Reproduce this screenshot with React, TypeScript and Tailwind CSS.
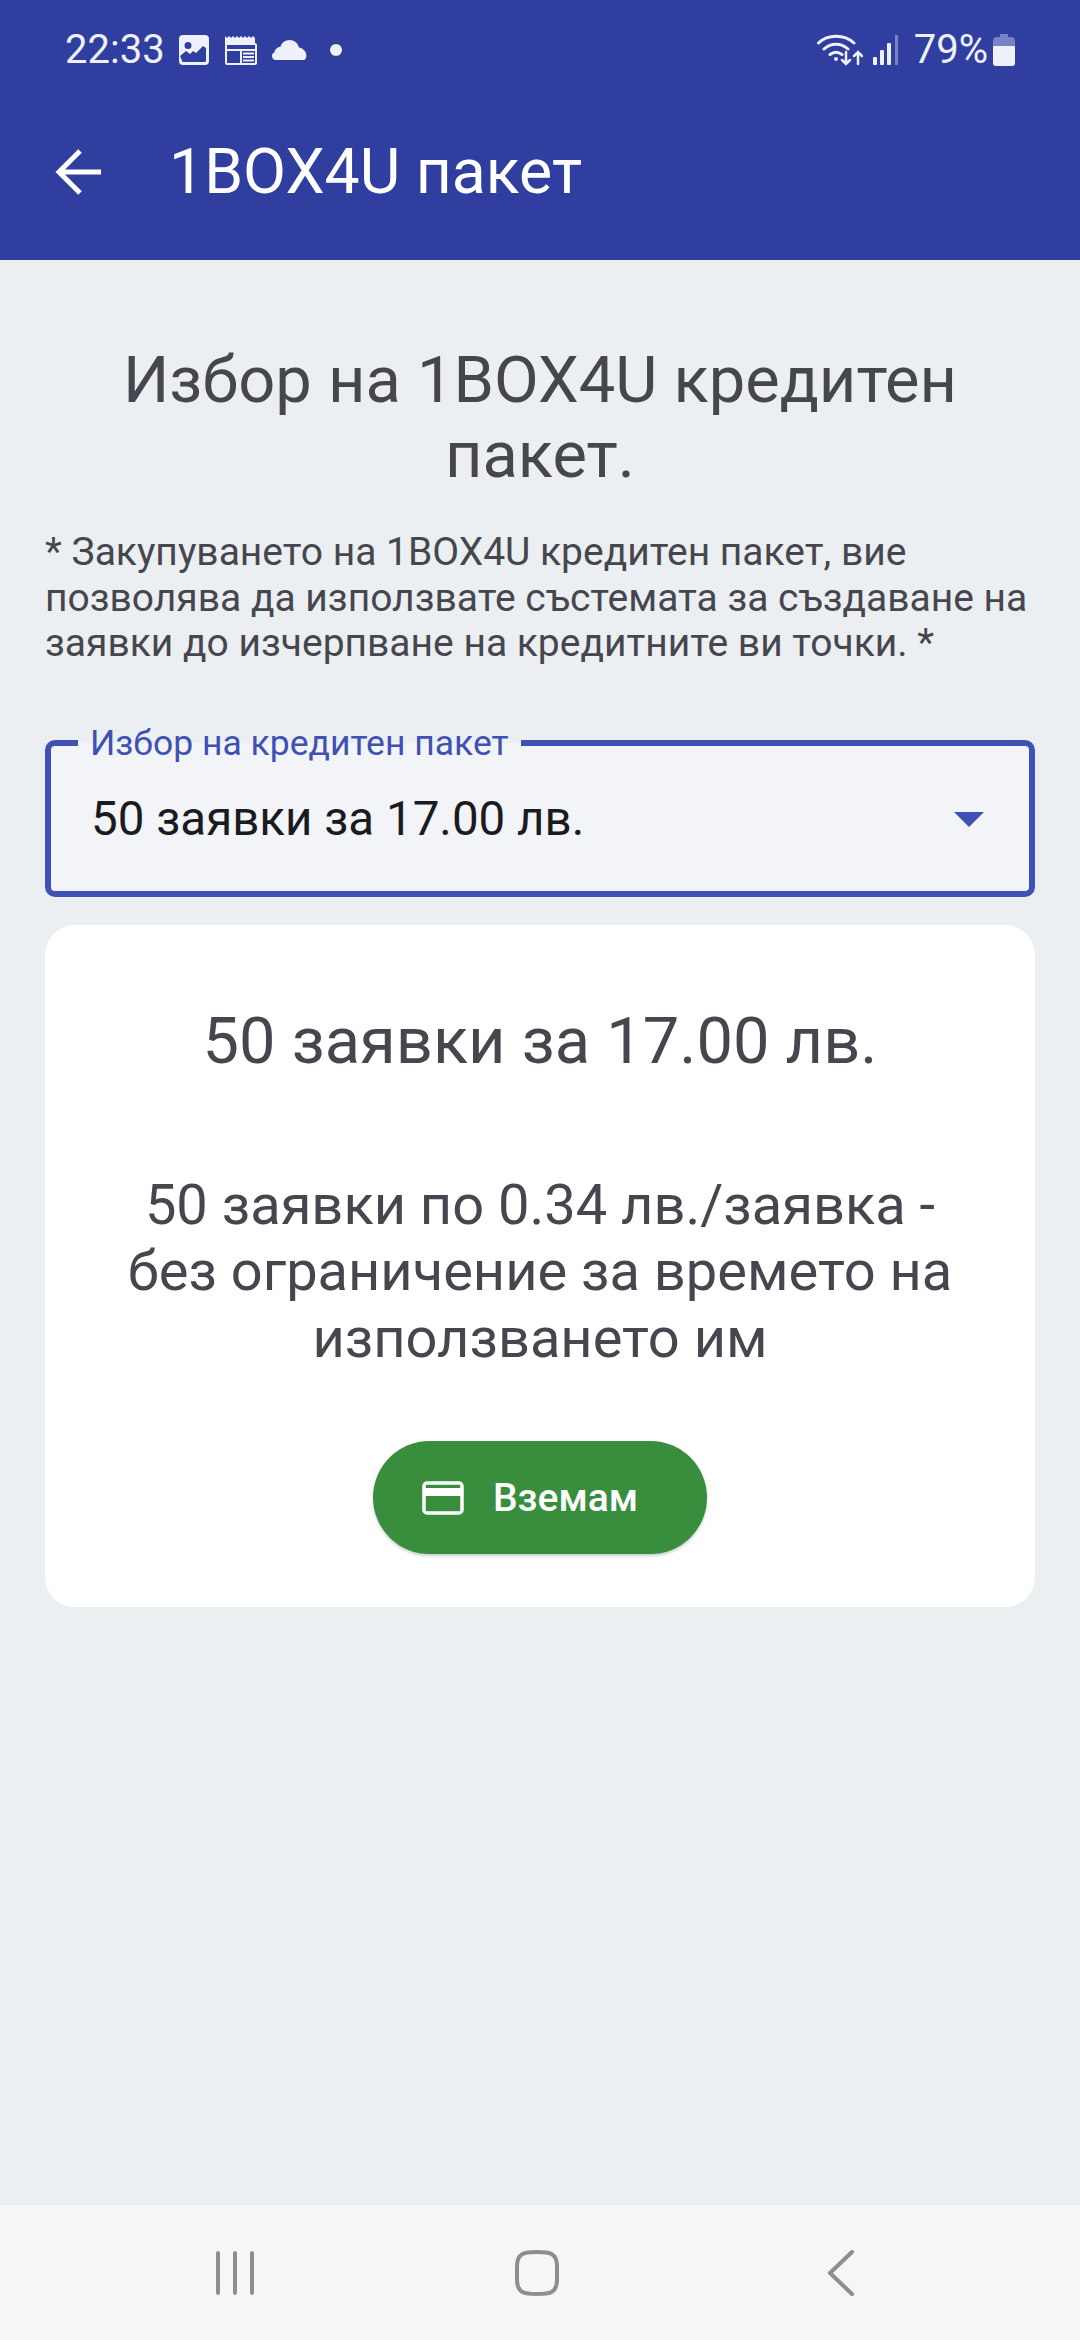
const FONT = "font-['Roboto','Noto_Sans',sans-serif]";

function StatusBar() {
  return (
    <div className="h-[100px] flex items-center justify-between pl-[65px] pr-[65px] text-[#eef0fa]">
      <div className="flex items-center">
        <span className="text-[40px] leading-none">22:33</span>
        <svg className="ml-[13px]" width="32" height="32" viewBox="0 0 32 32">
          <path fillRule="evenodd" fill="currentColor" d="M5 1h22a4 4 0 0 1 4 4v22a4 4 0 0 1-4 4H5a4 4 0 0 1-4-4V5a4 4 0 0 1 4-4zm5 7a3.500 3.500 0 1 0 0 7 3.500 3.500 0 0 0 0-7zM4 26.500a1.500 1.500 0 0 0 1.500 1.500h21a1.500 1.500 0 0 0 1.500-1.500V14l-3-2-7 7-3-2-3 3-4-3-6 5z" />
        </svg>
        <svg className="ml-[15px]" width="32" height="30" viewBox="0 0 32 30" fill="none" stroke="currentColor" strokeWidth="2">
          <path fill="currentColor" stroke="none" d="M0 1l2 2 2-2 2 2 2-2 2 2 2-2 2 2 2-2 2 2 2-2 2 2 2-2 2 2 2-2 2 2 0 7H0z" />
          <rect x="1" y="9" width="30" height="20" rx="1" />
          <path d="M1 15h30M16 15v14M18 18.500h11M18 22h11M18 25.500h11" />
        </svg>
        <svg className="ml-[15px]" width="35" height="22" viewBox="0 0 35 22">
          <path fill="currentColor" d="M4 21a4 4 0 0 1-1.500-7.700C3 10 5.500 8 8.500 8c.8-4 4.500-7 9-7 4.800 0 8.500 3 9.500 7.500 3 .3 5.500 2.400 6.700 5 .9 2 1 4-.2 6.300-.4.800-1 1.200-2 1.200z" />
        </svg>
        <div className="ml-[23px] w-3 h-3 rounded-full bg-[#eef0fa]" />
      </div>
      <div className="flex items-center">
        <svg width="46" height="34" viewBox="0 0 46 34" fill="none" stroke="currentColor" strokeLinecap="round" strokeWidth="3">
          <path d="M1.500 10C11 1 27 1 37 10M7 16c7-6.500 17-6.500 24 0M13 21.500c4-3 8-3 12 0" />
          <circle cx="19" cy="26" r="2" fill="currentColor" stroke="none" />
          <path strokeWidth="2.500" d="M29 19v12M25 27l4 4 4-4M41 31V19M37 23l4-4 4 4" />
        </svg>
        <svg className="ml-[9px]" width="27" height="30" viewBox="0 0 27 30">
          <rect x="1" y="22" width="4" height="8" rx="1" fill="currentColor" />
          <rect x="8" y="15" width="4" height="15" rx="1" fill="currentColor" />
          <rect x="15" y="8" width="4" height="22" rx="1" fill="currentColor" />
          <rect x="23" y="0" width="3" height="30" rx="1" fill="#7a83c4" />
        </svg>
        <span className="ml-[15px] text-[40px] leading-none">79%</span>
        <svg className="ml-[5px]" width="22" height="32" viewBox="0 0 22 32">
          <path fill="#7a83c4" d="M7 0h8v3h3a4 4 0 0 1 4 4v5H0V7a4 4 0 0 1 4-4h3z" />
          <path fill="currentColor" d="M0 12h22v17a3 3 0 0 1-3 3H3a3 3 0 0 1-3-3z" />
        </svg>
      </div>
    </div>
  );
}

function NavBar() {
  return (
    <div className="h-[135px] bg-[#f6f6f6] flex items-center justify-center pr-[6px]">
      <div className="w-[302px] flex justify-center">
        <svg width="44" height="44" viewBox="0 0 44 44" fill="none" stroke="#8e8e8e" strokeWidth="4" strokeLinecap="round">
          <path d="M5 2v40M22 2v40M39 2v40" />
        </svg>
      </div>
      <div className="w-[302px] flex justify-center">
        <svg width="44" height="46" viewBox="0 0 44 46" fill="none" stroke="#8e8e8e" strokeWidth="4">
          <path d="M22 2c6 0 11 0 14.500 2S42 10 42 16v14c0 6-2 10-5.500 12S28 44 22 44 11 44 7.500 42 2 36 2 30V16C2 10 4 6 7.500 4S16 2 22 2z" />
        </svg>
      </div>
      <div className="w-[302px] flex justify-center pl-[3px]">
        <svg width="28" height="46" viewBox="0 0 28 46" fill="none" stroke="#8e8e8e" strokeWidth="4" strokeLinecap="round" strokeLinejoin="round">
          <path d="M25 2L3 23l22 21" />
        </svg>
      </div>
    </div>
  );
}

export default function App() {
  return (
    <div className={`${FONT} w-[1080px] h-[2340px] flex flex-col bg-[#eceff1]`}>
      <div className="bg-[#303f9f] h-[260px] text-white">
        <StatusBar />
        <div className="flex items-center h-[144px] pl-[55px]">
          <svg width="46" height="46" viewBox="0 0 46 46" fill="none" stroke="white" strokeWidth="5">
            <path d="M46 23H4M25 2L4 23l21 21" />
          </svg>
          <span className="ml-[68px] text-[62.500px] leading-none">1BOX4U пакет</span>
        </div>
      </div>

      <main className="flex-1 px-[45px] pt-[83px]">
        <h1 className="text-center text-[65px] leading-[75px] text-[#46464f] px-[30px]">
          Избор на 1BOX4U кредитен пакет.
        </h1>
        <p className="mt-[37px] text-[39px] leading-[45.500px] text-[#46464f]">
          * Закупуването на 1BOX4U кредитен пакет, вие позволява да използвате състемата за създаване на заявки до изчерпване на кредитните ви точки. *
        </p>

        <div className="relative mt-[73px] h-[157px] border-[6px] border-[#3f51b5] rounded-[10px] bg-[#f3f4f8] flex items-center justify-between pl-[40px] pr-[45px] pt-[3px]">
          <span className="absolute left-[27px] top-[-24px] px-[12px] bg-[linear-gradient(to_bottom,#eceff1_50%,#f3f4f8_50%)] text-[35.500px] leading-[42px] text-[#3f51b5]">
            Избор на кредитен пакет
          </span>
          <span className="text-[47.500px] leading-none text-[#1b1b1f]">50 заявки за 17.00 лв.</span>
          <div className="w-0 h-0 border-x-[15px] border-x-transparent border-t-[15px] border-t-[#3f51b5]" />
        </div>

        <div className="mt-[28px] h-[682px] rounded-[30px] bg-white flex flex-col items-center px-[60px]">
          <div className="mt-[81px] text-[65px] leading-[70px] text-[#46464f]">50 заявки за 17.00 лв.</div>
          <p className="mt-[96px] text-center text-[56px] leading-[66.500px] text-[#46464f]">
            50 заявки по 0.34 лв./заявка - без ограничение за времето на използването им
          </p>
          <button className="mt-[70px] w-[334px] h-[113px] rounded-full bg-[#388e3c] shadow-[0_2px_3px_rgba(0,0,0,0.2)] flex items-center justify-start pl-[49px] text-white">
            <svg width="42" height="34" viewBox="0 0 42 34" fill="none" stroke="white" strokeWidth="3.500">
              <rect x="2" y="2" width="38" height="30" rx="3" />
              <rect x="2" y="7" width="38" height="8" fill="white" stroke="none" />
            </svg>
            <span className="ml-[29px] text-[39px] leading-none font-medium pt-[2px]">Вземам</span>
          </button>
        </div>
      </main>

      <NavBar />
    </div>
  );
}
